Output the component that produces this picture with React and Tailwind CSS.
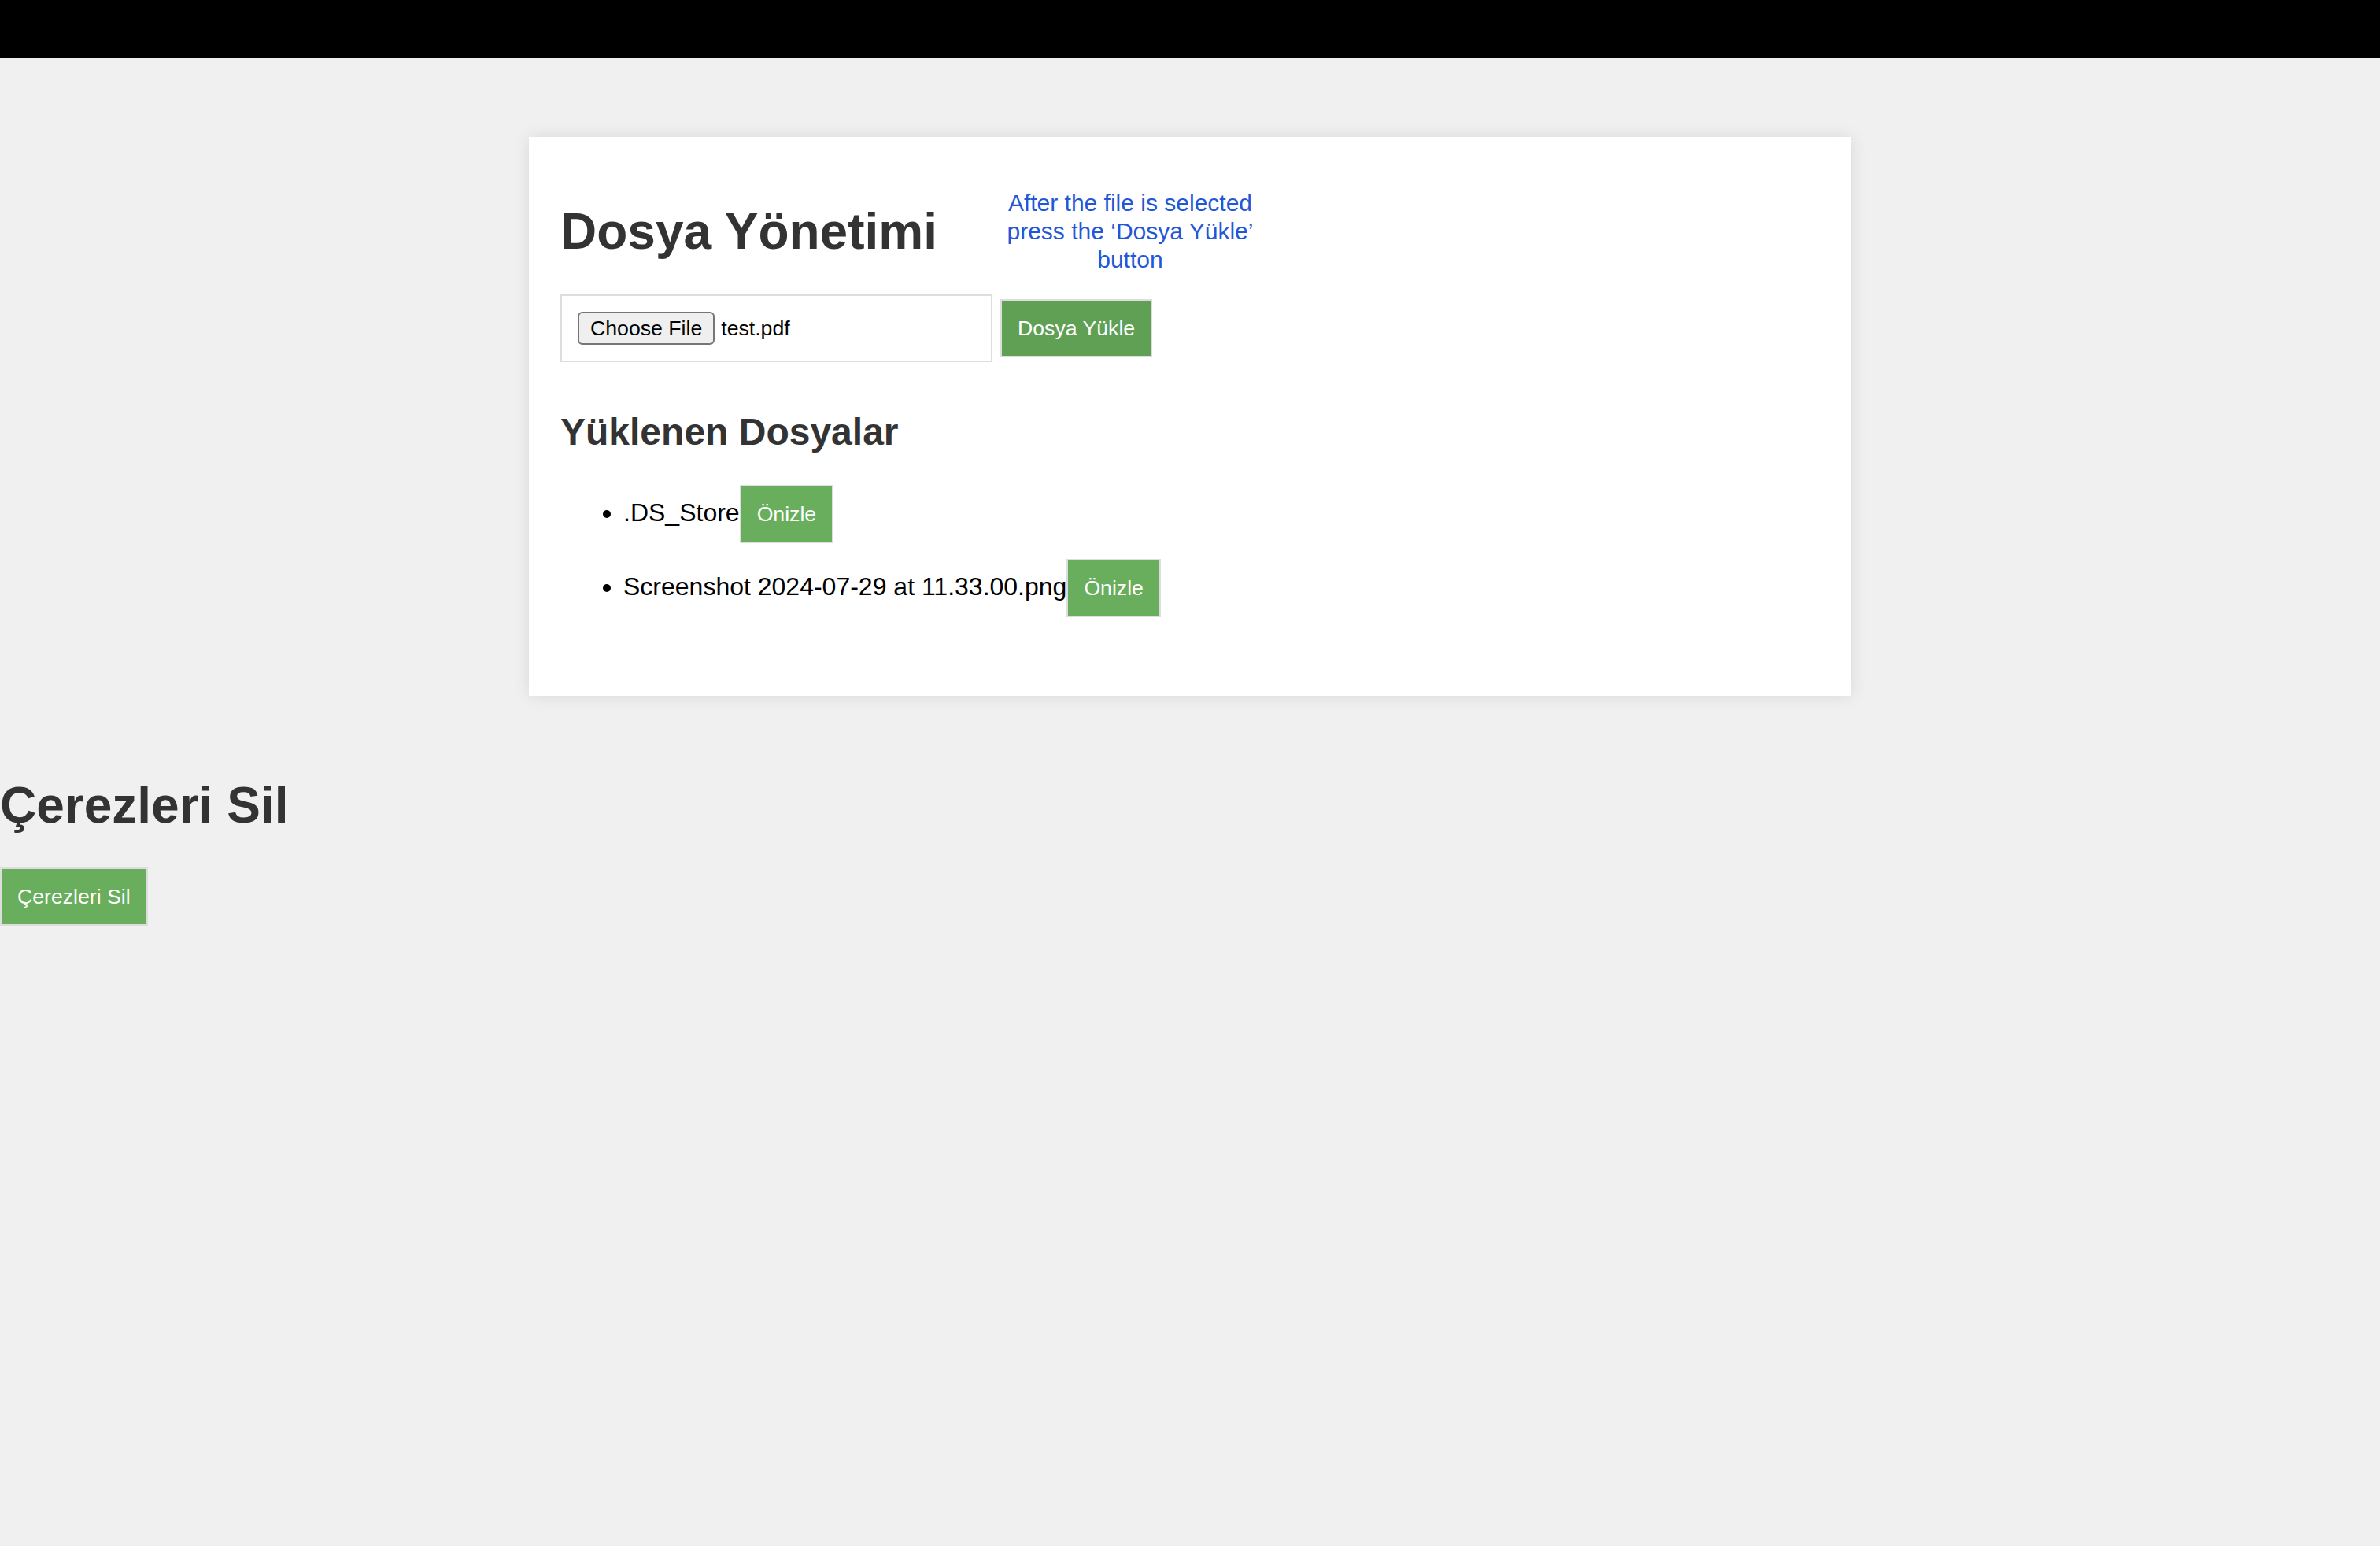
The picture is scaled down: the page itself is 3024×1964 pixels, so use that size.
const files = ['.DS_Store', 'Screenshot 2024-07-29 at 11.33.00.png'];

export default function App() {
  return (
    <div className="min-h-screen bg-[#f0f0f0] font-['Liberation_Sans',Arial,sans-serif] text-black">
      <header className="h-[74px] bg-black" />

      <main className="mx-auto mt-[100px] w-[1680px] bg-white px-[40px] pt-[40px] pb-[80px] shadow-[0_0_20px_rgba(0,0,0,0.1)]">
        <div className="flex items-center">
          <h1 className="my-[43px] text-[64px] font-bold leading-[74px] text-[#333]">Dosya Yönetimi</h1>
          <p className="ml-[85px] w-[320px] text-center text-[30px] leading-[36px] text-[#2457d6]">
            After the file is selected
            <br />
            press the ‘Dosya Yükle’
            <br />
            button
          </p>
        </div>

        <form className="flex items-center gap-[10px]" onSubmit={(event) => event.preventDefault()}>
          <div className="flex h-[86px] w-[549px] items-center border-2 border-[#ddd] px-[20px]">
            <button type="button" className="h-[42px] rounded-[6px] border-2 border-[#767676] bg-[#efefef] px-[14px] text-[26.67px] leading-[30px] text-black">
              Choose File
            </button>
            <span className="ml-[8px] text-[26.67px] leading-[30px]">test.pdf</span>
          </div>
          <button type="submit" className="border-2 border-[#ddd] bg-[#5fa055] px-[20px] py-[20px] text-[26.67px] leading-[30px] text-white">
            Dosya Yükle
          </button>
        </form>

        <h2 className="mt-[61px] mb-[40px] text-[48px] font-bold leading-[55px] text-[#333]">Yüklenen Dosyalar</h2>
        <ul className="list-disc pl-[80px] text-[32px]">
          {files.map((name) => (
            <li key={name} className="mb-[20px]">
              {name}
              <button type="button" className="inline-block border-2 border-[#ddd] bg-[#68ae5c] px-[20px] py-[20px] text-[26.67px] leading-[30px] text-white">
                Önizle
              </button>
            </li>
          ))}
        </ul>
      </main>

      <h1 className="mt-[102px] mb-[42px] text-[64px] font-bold leading-[74px] text-[#333]">Çerezleri Sil</h1>
      <button type="button" className="border-2 border-[#ddd] bg-[#68ae5c] px-[20px] py-[20px] text-[26.67px] leading-[30px] text-white">
        Çerezleri Sil
      </button>
    </div>
  );
}
